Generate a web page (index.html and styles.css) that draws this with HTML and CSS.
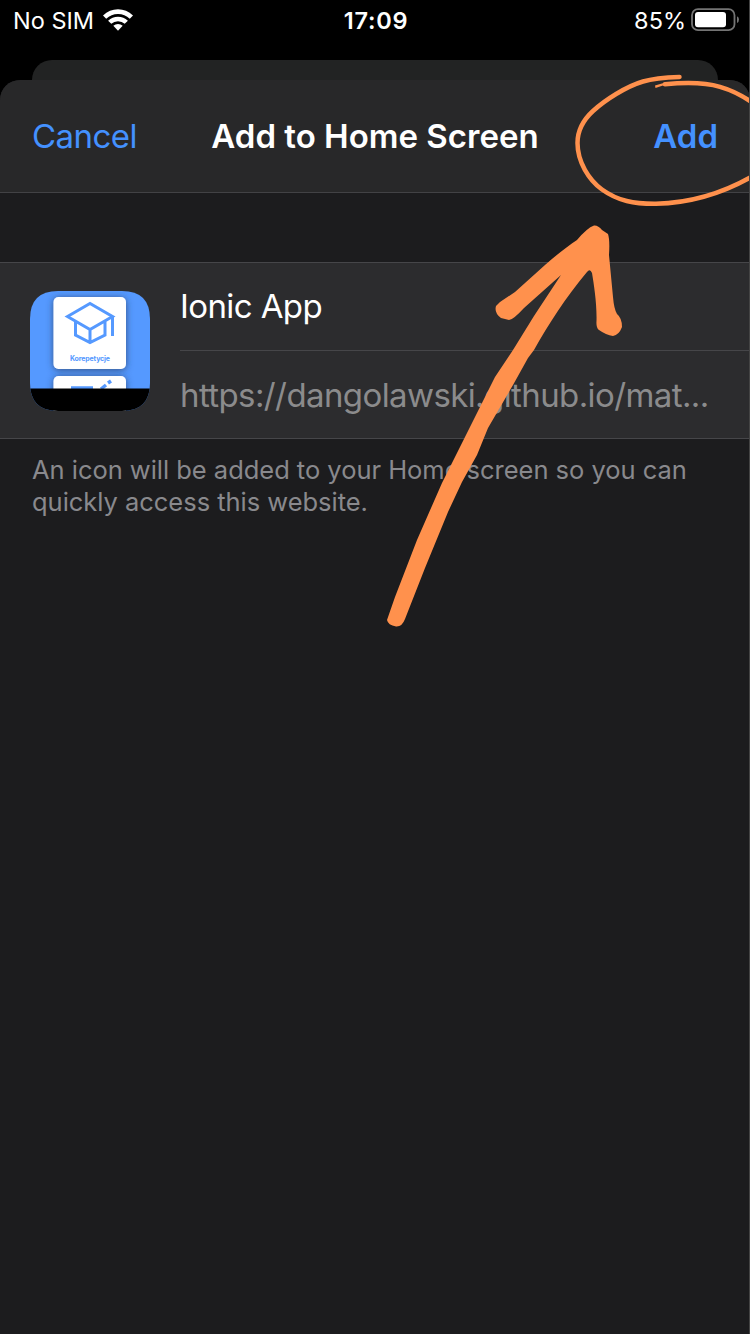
FILE: index.html
```html
<!DOCTYPE html>
<html lang="en">
<head>
<meta charset="utf-8">
<title>Add to Home Screen</title>
<link rel="stylesheet" href="styles.css">
</head>
<body>
<div class="phone">
  <header class="status">
    <div class="status-left">
      <span class="carrier">No SIM</span>
      <svg class="wifi" width="30" height="22" viewBox="0 0 30 22" fill="#fff">
        <path d="M0 6.6Q6.500 .2 15 .2T30 6.600L26.800 9.800Q21.800 4.900 15 4.900T3.200 9.800Z"/>
        <path d="M5.100 11.700Q9.300 7.700 15 7.700T24.900 11.700L21.700 14.700Q19 12.200 15 12.200T8.300 14.700Z"/>
        <path d="M10.300 16.700Q12.300 15 15 15T19.700 16.700L15 21.700Z"/>
      </svg>
    </div>
    <span class="clock">17:09</span>
    <div class="status-right">
      <span class="percent">85%</span>
      <svg class="battery" width="48" height="24" viewBox="0 0 48 24">
        <rect x="1" y="1.200" width="42.500" height="21" rx="6" fill="none" stroke="#747474" stroke-width="1.800"/>
        <rect x="4" y="4" width="31" height="15.300" rx="3" fill="#fff"/>
        <path d="M46 8.300Q48 9 48 11.600T46 15Z" fill="#747474"/>
      </svg>
    </div>
  </header>
  <div class="back-sheet"></div>
  <main class="sheet">
    <nav class="bar">
      <span class="cancel">Cancel</span>
      <span class="title">Add to Home Screen</span>
      <span class="add">Add</span>
    </nav>
    <section class="card">
      <svg class="app-icon" width="120" height="120" viewBox="0 0 120 120">
        <defs>
          <clipPath id="mask"><path d="M28 0H92Q120 0 120 28V92Q120 120 92 120H28Q0 120 0 92V28Q0 0 28 0Z"/></clipPath>
          <filter id="shade" x="-20%" y="-20%" width="140%" height="140%"><feDropShadow dx="0" dy="1" stdDeviation="3.500" flood-color="#2b3c60" flood-opacity=".8"/></filter>
        </defs>
        <g clip-path="url(#mask)">
          <rect width="120" height="120" fill="#5599ff"/>
          <rect x="23.500" y="6" width="72.500" height="72" rx="5" fill="#fff" filter="url(#shade)"/>
          <rect x="23.500" y="85" width="72.500" height="50" rx="5" fill="#fff" filter="url(#shade)"/>
          <g fill="none" stroke="#5599ff" stroke-width="3">
            <path d="M37.500 25.500L60 12.500L82.500 25.500L60 38.500ZM45.500 30V44L60 51.500L75 44V30M60 38V52M82.500 25V45"/>
            <path d="M41 97H63M71 98L76 94M78 92L81 90" stroke-width="3.500"/>
          </g>
          <text x="40" y="70" class="icon-label" textLength="40">Korepetycje</text>
          <rect y="97.500" width="120" height="23" fill="#000"/>
        </g>
      </svg>
      <div class="fields">
        <div class="field"><span class="name">Ionic App</span></div>
        <div class="field"><span class="url">https://dangolawski.github.io/mat...</span></div>
      </div>
    </section>
    <p class="note">An icon will be added to your Home screen so you can<br>quickly access this website.</p>
  </main>
  <svg class="marks" width="750" height="1334" viewBox="0 0 750 1334" fill="#ff914d">
    <g fill="none" stroke="#ff914d" stroke-width="4.500" stroke-linecap="round">
      <path d="M679.500 77C664 77.500 653 78.500 643 81.500C626 86.500 605 100 593 111C581 122 577.500 132 577.500 143C577.500 162 589 180 602 189.500C618 201 634 204 656 203.800C690 203 723 193 752 176.500"/>
      <path d="M665 84.300C684 82.500 705 82.500 720 86.800C733 90.500 743 96 752 102.500"/>
    </g>
    <path d="M655 85.500L667 82V86L663 85.500L655.500 88Z"/>
    <path d="M594 225.500Q598 225 602 230L608 234Q610 240 609 255L613 297Q614 309 617 314Q622 318 622 327Q619 335 613 336Q606 335 599 330Q596 328 596.500 321C597 304 594 285 592 273Q590 268 587 272C566 297 548 325 534 350L528 358L513 385L488 428L477 455L462 482L448 512L425 568L405 619Q402 627 396 626.500Q388 625 387 620L395 597L417 540L442 483L465 437L495 377L513 350L534 316L561 275L524 308Q513 320 509 320L501 318Q494 313 496 306L500 302L515 292L545 265C555 256 568 246 577 240Q587 228 594 225.500Z"/>
  </svg>
  <div class="edge"></div>
</div>
</body>
</html>
```
FILE: styles.css
```css
* { box-sizing: border-box; }
body { margin: 0; background: #000; font-family: Inter, "Liberation Sans", sans-serif; }
.phone { position: relative; width: 750px; height: 1334px; overflow: hidden; display: flex; flex-direction: column; background: #000; color: #fff; }
.status { height: 60px; display: grid; grid-template-columns: 1fr auto 1fr; align-items: start; padding: 8px 11px 0 13px; font-size: 23.5px; line-height: 26px; flex: none; }
.status-left, .status-right { display: flex; }
.status-right { justify-content: flex-end; }
.wifi { margin: 1px 0 0 9px; }
.battery { margin-left: 5px; flex: none; }
.clock { font-weight: 600; letter-spacing: .8px; }
.back-sheet { flex: none; height: 20px; margin: 0 32px; border-radius: 20px 20px 0 0; background: #222323; }
.sheet { flex: 1; background: #1c1c1e; border-radius: 20px 20px 0 0; overflow: hidden; }
.bar { height: 113px; background: #282829; border-bottom: 1px solid #424245; display: grid; grid-template-columns: 1fr auto 1fr; align-items: center; padding: 0 32px; font-size: 33px; white-space: nowrap; }
.cancel, .add { color: #4491ff; }
.cancel { letter-spacing: -.55px; }
.title, .add { font-weight: 600; }
.add { justify-self: end; }
.card { margin-top: 69px; height: 177px; background: #2c2c2e; border: solid #464649; border-width: 1px 0; display: flex; padding-left: 30px; }
.app-icon { margin-top: 28px; flex: none; }
.fields { margin-left: 30px; flex: 1; }
.field { height: 87px; padding-bottom: 2px; display: flex; align-items: center; font-size: 33px; letter-spacing: -.6px; white-space: nowrap; }
.field + .field { height: 88px; padding-bottom: 0; border-top: 1px solid #464649; color: #8b8b8c; }
.note { margin: 15px 32px; color: #89898d; font-size: 25.5px; line-height: 32px; letter-spacing: -.03px; white-space: nowrap; }
.icon-label { font: 700 7px Inter, sans-serif; fill: #5599ff; }
.marks { position: absolute; left: 0; top: 0; }
.edge { position: absolute; right: 0; top: 0; width: 1px; height: 1334px; background: #444; }
```
